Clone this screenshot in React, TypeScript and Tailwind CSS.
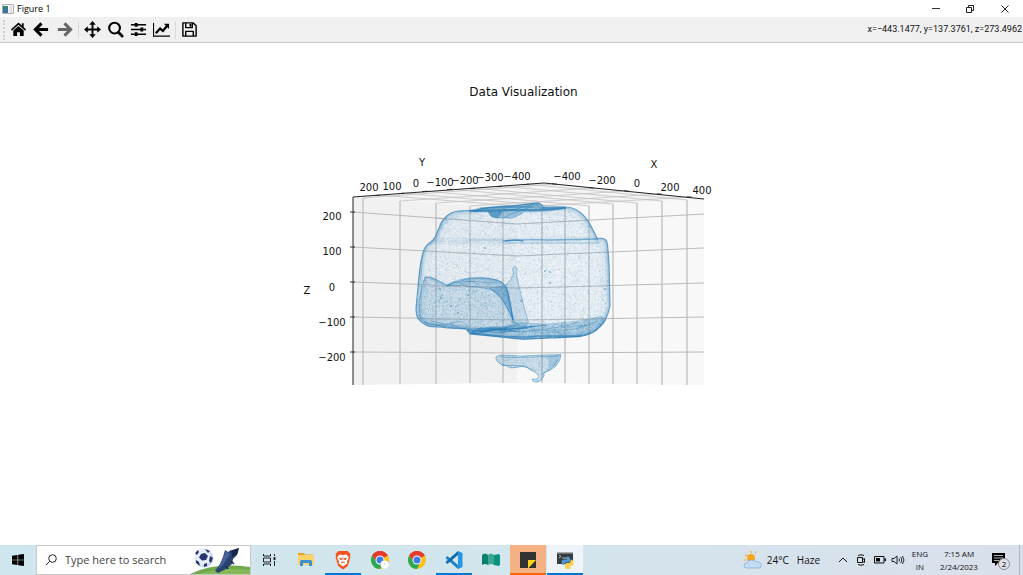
import type { ReactNode } from "react";

// Small seeded generator so the point cloud looks the same on every render
function createRandom(seed: number) {
  let s = seed;
  return () => {
    s = (s * 1664525 + 1013904223) % 4294967296;
    return s / 4294967296;
  };
}

// Scatter n one pixel dots inside a box, clipped later by the outline
function scatter(n: number, seed: number, x: number, y: number, w: number, h: number) {
  const rand = createRandom(seed);
  let d = "";
  for (let i = 0; i < n; i++) {
    d += `M${(x + rand() * w).toFixed(1)} ${(y + rand() * h).toFixed(1)}h1`;
  }
  return d;
}

const BODY =
  "M418 287C419 275 420 262 423 253C424 247 428 244 433 240C437 236 437 232 439 228C442 219 449 212 458 211L477 210C490 206 508 207 520 205L535 203Q541 202 543 207L567 207C580 208 588 219 593 230L597 238L603 238.500Q607 239 607.500 245L609 262L610 306C608 316 605 323 595 331C586 338 565 337 550 338L523 339.300L500 337L470 334L466 329L447 328C438 326 430 328 426 325C417 320 416 315 416 309Z";
const LOBE =
  "M420 318C417 306 421 288 425 277Q431 276 437 280L447 285Q453 283 460 281C469 277 484 277 493 279C505 281 508 288 509 300L514 322L520 325L500 329L467 329L446 327L427 324Z";
const FOLD =
  "M447 285Q460 278 472 278C486 278 497 279 503 283C509 290 510 302 513 320C508 311 505 299 494 291C485 286 470 288 462 285Q455 287 447 285Z";
const FOLD_EDGE = "M489 288Q499 286 505 286C509 293 510 305 513 320C508 309 504 298 489 288Z";
const SPIKE = "M506 285L511 279Q515 273 512.500 269Q514 265 517 268Q516 276 518.500 284L523 303L528.500 323L513 323Q511 301 506 285Z";
const BASE =
  "M467 330Q490 326 502 327L520 323L547 324L577 321L602 316L606 320Q600 332 580 337L550 338L523 339L500 337L470 334Z";
const CHIP =
  "M496 357Q498 355 503 355L520 356L546 355L561 354.500Q561 360 556 366Q551 370 544 373L544 376Q541 382 537 382Q532 382 532 379Q538 380 539 376Q536 372 531 370Q525 365 519 367L511 368Q506 365 502 365Q495 361 496 357Z";
const CREASE = "M470 211L479 208Q500 206 520 205L537 203L541 207L566 208L550 211L524 212Q513 220 506 218L498 218L491 216L488 212Z";

const BODY_DOTS = scatter(11000, 7, 414, 202, 198, 140);
const BODY_GLINTS = scatter(11000, 91, 414, 202, 198, 140);
const LOBE_DOTS = scatter(4000, 21, 414, 275, 118, 56);
const BASE_DOTS = scatter(3500, 33, 464, 314, 144, 27);
const CHIP_DOTS = scatter(800, 45, 494, 353, 70, 30);

// Vertical grid lines: [x, top, bottom]
const VERTICALS = [
  [363, 198, 385], [400, 201, 384], [436, 203, 384], [470, 206, 383], [503, 208, 383],
  [542, 208, 383], [565, 207, 383], [589, 206, 384], [613, 204, 384], [637, 203, 384],
  [662, 201, 385], [687, 200, 385],
];

// Height of every z line at the left wall, the corner and the right wall
const Z_LINES = [
  [212, 224, 214],
  [247, 256, 248],
  [282, 288, 283],
  [317, 320, 317],
  [352, 353, 352],
];

// Ceiling lines: [x1, y1, x2, y2]
const CEILING = [
  [378, 195, 542, 208], [402, 193, 565, 207], [425, 191, 589, 206], [450, 189, 613, 204],
  [473, 188, 637, 203], [500, 186, 662, 201], [527, 184, 687, 200],
  [555, 184, 363, 198], [592, 188, 400, 201], [627, 191, 436, 203], [660, 194, 470, 206], [690, 197, 503, 208],
];

const LABELS: [string, number, number][] = [
  ["200", 369, 191], ["100", 392, 190], ["0", 416, 187], ["−100", 440, 186],
  ["−200", 465, 184], ["−300", 490, 181], ["−400", 517, 180],
  ["−400", 567, 180], ["−200", 602, 184], ["0", 637, 187], ["200", 670, 191], ["400", 702, 194],
  ["200", 332, 220], ["100", 332, 255], ["0", 332, 291], ["−100", 332, 326], ["−200", 332, 361],
  ["Y", 422, 166], ["X", 654, 168], ["Z", 307, 294],
];

const SPECKS = [
  [440, 289], [441, 298], [451, 306], [458, 313], [468, 295], [545, 271],
  [550, 272], [550, 283], [605, 289], [521, 301], [485, 248],
];

function Plot() {
  return (
    <svg viewBox="300 141 448 250" className="mt-10 block w-[448px]" role="img" aria-label="3D point cloud">
      <defs>
        <clipPath id="body"><path d={BODY} /></clipPath>
        <clipPath id="lobe"><path d={LOBE} /></clipPath>
        <clipPath id="base"><path d={BASE} /></clipPath>
        <clipPath id="chip"><path d={CHIP} /></clipPath>
      </defs>

      {/* Panes */}
      <path d="M353 197L517 209V383L353 385Z" fill="#f1f1f1" />
      <path d="M517 209L704 199V385L517 383Z" fill="#f8f8f8" />
      <path d="M353 197L544 183L704 199L517 209Z" fill="#f4f4f4" />

      {/* Grid */}
      <g fill="none">
        {VERTICALS.map(([x, top, bottom]) => (
          <g key={x}>
            <path d={`M${x} ${top}V${bottom}`} stroke="#dadada" strokeWidth="2" />
            <path d={`M${x} ${top}V${bottom}`} stroke="#c6c6c6" strokeWidth="0.8" />
          </g>
        ))}
        {Z_LINES.map(([left, mid, right]) => (
          <path key={left} d={`M353 ${left}L517 ${mid}L704 ${right}`} stroke="#bababa" />
        ))}
        {CEILING.map(([x1, y1, x2, y2]) => (
          <path key={x1} d={`M${x1} ${y1}L${x2} ${y2}`} stroke="#c2c2c2" strokeWidth="0.8" />
        ))}
      </g>

      {/* Axis lines and ticks */}
      <g fill="none" stroke="#222">
        <path d="M353 385V197L544 183L704 199" />
        {Z_LINES.map(([left]) => (
          <path key={left} d={`M350 ${left}h5`} strokeWidth="0.9" />
        ))}
        {CEILING.map(([x, y], i) => (
          <path key={x} d={i < 7 ? `M${x - 3} ${y + 0.7}l5 -.5` : `M${x - 3} ${y - 0.3}l5 .5`} strokeWidth="0.8" />
        ))}
      </g>

      {/* Point cloud */}
      <g fill="#1f77b4" stroke="#1f77b4">
        <path d={BODY} fill="#fff" fillOpacity="0.35" stroke="none" />
        <path d={BODY} fillOpacity="0.08" strokeOpacity="0.65" strokeWidth="1.2" />
        <g clipPath="url(#body)" fill="none">
          <path d={BODY_DOTS} strokeOpacity="0.1" />
          <path d={BODY_GLINTS} stroke="#fff" strokeOpacity="0.28" />
          <path d={BODY} strokeWidth="18" strokeOpacity="0.04" />
          <path d={BODY} strokeWidth="8" strokeOpacity="0.1" />
          <path d={BODY} strokeWidth="4" strokeOpacity="0.18" />
          <path d="M430 241H500L598 240" strokeOpacity="0.07" strokeWidth="7" />
          <path d="M503 241Q530 239 550 240L598 239" strokeOpacity="0.5" strokeWidth="1.4" />
          <path d="M505 241Q515 239 523 241" strokeOpacity="0.6" strokeWidth="1.6" />
          <path d="M503 243H600M470 240H503" strokeOpacity="0.14" strokeWidth="2" />
          <path d="M422 255L421 288Q423 302 420 318M439 230Q446 220 458 216" strokeOpacity="0.2" />
        </g>
        <path d={LOBE} fillOpacity="0.11" strokeOpacity="0.45" strokeWidth="0.9" />
        <g clipPath="url(#lobe)" fill="none">
          <path d={LOBE_DOTS} strokeOpacity="0.1" />
          <path d={LOBE} strokeWidth="5" strokeOpacity="0.13" />
        </g>
        <path d={FOLD} fillOpacity="0.12" strokeOpacity="0.5" strokeWidth="0.8" />
        <path d={FOLD_EDGE} fillOpacity="0.3" strokeOpacity="0.4" strokeWidth="0.7" />
        <path d="M425 277Q433 277 447 286Q457 279 462 284Q472 278 480 286M462 281L498 283" fill="none" strokeOpacity="0.4" strokeWidth="0.8" />
        <path d={SPIKE} fillOpacity="0.16" strokeOpacity="0.45" strokeWidth="0.8" />
        <path d={BASE} fillOpacity="0.2" strokeOpacity="0.2" strokeWidth="0.8" />
        <path d={BASE_DOTS} clipPath="url(#base)" strokeOpacity="0.14" />
        <g fill="none">
          <path d="M470 332Q490 328 510 329L547 325M468 330L500 333L535 326M474 334L500 329L520 332M480 331L528 328" strokeOpacity="0.6" />
          <path d="M470 333L500 336Q522 338 540 336L581 336" strokeWidth="1.5" strokeOpacity="0.55" />
          <path d="M530 330Q560 329 577 322M540 333Q575 332 598 321M560 328L590 325M500 332L560 330" strokeOpacity="0.3" />
          <path d="M424 322Q440 328 452 323T470 329M430 321Q446 324 458 326" strokeOpacity="0.4" />
          <path d="M472 332Q489 328 506 330" strokeWidth="4" strokeOpacity="0.45" />
          <path d="M500 330L527 326" strokeWidth="2.500" strokeOpacity="0.35" />
        </g>
        <path d={CREASE} fillOpacity="0.35" strokeOpacity="0.4" strokeWidth="0.7" />
        <path d="M470 211L505 210Q530 211 566 208" fill="none" strokeWidth="2" strokeOpacity="0.7" />
        <path d="M488 211L492 217L498 218L502 212Z" fillOpacity="0.5" strokeOpacity="0.35" />
        <path d="M504 218Q514 212 534 206M480 208L535 207M498 212Q517 210 534 204M535 204Q538 208 546 210" fill="none" strokeOpacity="0.5" strokeWidth="0.8" />
        <path d={CHIP} fillOpacity="0.2" strokeOpacity="0.5" strokeWidth="0.9" />
        <path d="M546 357L560 355Q559 362 554 366L546 370Q552 363 546 357Z" fillOpacity="0.2" stroke="none" />
        <path d={CHIP_DOTS} clipPath="url(#chip)" strokeOpacity="0.12" />
        <path d="M500 357Q520 358 534 357L559 356M543 373Q554 369 558 359M502 365L524 366L533 370" fill="none" strokeOpacity="0.5" strokeWidth="0.8" />
        {SPECKS.map(([x, y]) => (
          <circle key={`${x}-${y}`} cx={x} cy={y} r="0.7" stroke="none" />
        ))}
      </g>

      {/* Grid seen through the cloud */}
      <g fill="none" stroke="#8a9aa5" strokeOpacity="0.4">
        <path d="M436 234V327M470 211V334M503 208V337M542 208V338M565 208V337M589 222V334M436 218L517 224L590 220M424 251L517 256L608 252M418 286L517 288L609 286M417 319L517 320L606 319" />
      </g>

      <g fill="#111" textAnchor="middle" className="font-['DejaVu_Sans',sans-serif] text-[10px]">
        {LABELS.map(([text, x, y]) => (
          <text key={`${x}-${y}`} x={x} y={y}>{text}</text>
        ))}
      </g>
    </svg>
  );
}

function Tool({ label, children }: { label: string; children: ReactNode }) {
  return (
    <button type="button" aria-label={label} className="flex h-6 w-[23px] items-center justify-center">
      <svg viewBox="0 0 18 18" className="size-[17px]" fill="#000">{children}</svg>
    </button>
  );
}

function Toolbar() {
  return (
    <div className="flex h-[26px] items-center border-b border-[#c9c9c9] bg-[#f0f0f0] pr-px">
      <div className="ml-[3px] mr-[2px] h-5 border-l-2 border-dotted border-[#cfcfcf]" />
      <Tool label="Home">
        <path d="M9 1.500L1 9l1 1.200L9 4l7 6.200L17 9l-2.500-2.400V2.500h-2v2.200z" />
        <path d="M3.500 10L9 5.200l5.500 4.800v6h-4v-4h-3v4h-4z" />
      </Tool>
      <Tool label="Back">
        <path d="M9 2.500L2.500 9L9 15.500M3 9h13" fill="none" stroke="#000" strokeWidth="3.200" />
      </Tool>
      <Tool label="Forward">
        <path d="M9 2.500L15.500 9L9 15.500M15 9H2" fill="none" stroke="#666" strokeWidth="3.200" />
      </Tool>
      <div className="mx-[2px] h-[18px] w-px bg-[#d9d9d9]" />
      <Tool label="Pan">
        <path d="M9 0l3.500 4H10v4h4V5.500L18 9l-4 3.500V10h-4v4h2.500L9 18l-3.500-4H8v-4H4v2.500L0 9l4-3.500V8h4V4H5.500z" />
      </Tool>
      <Tool label="Zoom">
        <circle cx="8" cy="7.500" r="5.700" fill="none" stroke="#000" strokeWidth="2.200" />
        <path d="M12 12L16 16" stroke="#000" strokeWidth="3" strokeLinecap="round" />
      </Tool>
      <Tool label="Configure subplots">
        <path d="M1 4h16M1 9h16M1 14h16" stroke="#000" strokeWidth="1.500" />
        <path d="M5 2h3v4H5zM11 7h3v4h-3zM5 12h3v4H5z" />
      </Tool>
      <Tool label="Edit axes">
        <path d="M.500 2v14H18" fill="none" stroke="#000" strokeWidth="1.300" />
        <path d="M3 13l4.500-5 3 2.500L15 5" fill="none" stroke="#000" strokeWidth="2.400" />
        <path d="M11.500 3H17v5.500z" />
      </Tool>
      <div className="mx-[2px] h-[18px] w-px bg-[#d9d9d9]" />
      <Tool label="Save">
        <path d="M2 2h11l3 3v11H2zM5 2v5h7V2M5 16v-5h8v5" fill="none" stroke="#000" strokeWidth="1.500" strokeLinejoin="round" />
        <path d="M9 3h2v3H9z" />
      </Tool>
      <span className="ml-auto font-[Roboto,sans-serif] text-[9px] text-[#111]">x=−443.1477, y=137.3761, z=273.4962</span>
    </div>
  );
}

function TitleBar() {
  return (
    <header className="flex h-[17px] items-center">
      <svg viewBox="0 0 12 10" className="ml-[2px] h-[10px] w-3">
        <path d="M.5.500h11v9H.5z" fill="#f4f4f4" stroke="#b0b0b0" />
        <path d="M1 2h5v7H1z" fill="#2f8577" />
        <path d="M1 5h5v4H1z" fill="#3e75a8" />
        <path d="M8 2h2v7H8z" fill="#ddd" />
      </svg>
      <h1 className="ml-[3px] text-[9px] text-black">Figure 1</h1>
      <div className="ml-auto flex h-full">
        <button type="button" aria-label="Minimize" className="flex w-[34px] items-center justify-center">
          <svg viewBox="0 0 10 10" className="size-[10px]"><path d="M1 4.500h8" stroke="#333" /></svg>
        </button>
        <button type="button" aria-label="Restore" className="flex w-[34px] items-center justify-center">
          <svg viewBox="0 0 10 10" className="size-[10px]" fill="none" stroke="#222">
            <path d="M1.500 3.500h5v5h-5zM3.500 3V1.500h5v5H7" />
          </svg>
        </button>
        <button type="button" aria-label="Close" className="flex w-9 items-center justify-center">
          <svg viewBox="0 0 10 10" className="size-[10px]"><path d="M1.500 1.500l7 7m0-7l-7 7" stroke="#222" /></svg>
        </button>
      </div>
    </header>
  );
}

function Chrome() {
  return (
    <>
      <circle cx="10" cy="10" r="9" fill="#fbc116" />
      <path d="M10 10L2.200 5.500A9 9 0 0 1 17.800 5.500z" fill="#e33b2e" />
      <path d="M10 6h7.900A9 9 0 0 0 2.200 5.500L6.500 12z" fill="#e33b2e" />
      <path d="M2.200 5.500A9 9 0 0 0 10 19l3.500-7L10 14Q7.500 14 6.500 12z" fill="#2da94f" />
      <circle cx="10" cy="10" r="4.500" fill="#fff" />
      <circle cx="10" cy="10" r="3.500" fill="#3b7ded" />
    </>
  );
}

interface TaskProps {
  label: string;
  className?: string;
  children: ReactNode;
}

function Task({ label, className = "border-transparent", children }: TaskProps) {
  return (
    <button type="button" aria-label={label} className="flex h-full w-[37px] pr-px">
      <span className={`flex h-full w-full items-center justify-center border-b-2 ${className}`}>
        <svg viewBox="0 0 20 20" className="mt-[2px] size-5">{children}</svg>
      </span>
    </button>
  );
}

function SearchArt() {
  return (
    <svg viewBox="0 0 60 28" className="h-7 w-[60px] shrink-0">
      <path d="M0 28Q25 16 60 21V28z" fill="#6fa84a" />
      <path d="M8 28Q35 20 60 24V28z" fill="#83b957" />
      <circle cx="14" cy="12" r="9.500" fill="#c9d8f4" />
      <circle cx="13" cy="11" r="8" fill="#e6edfb" />
      <path d="M11 8l4-1 3 3-2 4-4 .5-3-3zM5 7l3-3 1 2-2 3zM15 3l5 2-2 2zM20 10l3 2-2 5-2-2zM6 14l3 2 1 4-4-3zM14 18l3-1v3l-3 1z" fill="#28356f" />
      <path d="M35 4l3 2 3-2 2 2 5-3-1 6-4 4-1 5-6 5-8 4-3-2 5-7 3-7z" fill="#2c4272" />
      <path d="M36 5l4 3-4 6-4 6-4 3 4-8z" fill="#46669b" />
      <path d="M42 5l6-2-1 4-4 3zM36 20l2 3M41 15l3 3" fill="#18264d" stroke="#18264d" strokeWidth="1.500" />
    </svg>
  );
}

function Taskbar() {
  return (
    <footer className="flex h-[30px] items-stretch bg-linear-to-r from-[#cfe6ee] via-[#d3e5ed] to-[#d9e0ec] text-[#111]">
      <button type="button" aria-label="Start" className="flex w-9 items-center justify-center">
        <svg viewBox="0 0 12 12" className="size-3">
          <path d="M0 1.700l5.500-.8v4.800H0zM6.200.800L12 0v5.700H6.200zM0 6.300h5.500v4.800L0 10.300zM6.200 6.300H12V12l-5.800-.8z" />
        </svg>
      </button>
      <label className="flex w-[215px] items-center overflow-hidden border border-[#c8c8c8] bg-white">
        <svg viewBox="0 0 12 12" className="ml-2 mr-2 size-3 shrink-0" fill="none" stroke="#222">
          <circle cx="7.500" cy="4.500" r="3.800" />
          <path d="M4.700 7.300L.8 11.200" />
        </svg>
        <input type="text" aria-label="Search" placeholder="Type here to search" className="w-0 grow bg-transparent text-[11px] outline-none placeholder:text-[#444]" />
        <SearchArt />
      </label>
      <Task label="Task view">
        <path d="M4.500 4v2h7V4M4.500 16v-2h7v2M4.500 8h7v4h-7zM15.500 4v2M15.500 11v5" fill="none" stroke="#222" />
        <path d="M14.500 7h2v3h-2z" fill="#222" />
      </Task>
      <Task label="File Explorer">
        <path d="M2 3h6l1 1.500h8V8H2z" fill="#e5a521" />
        <path d="M2 5h16v10H2z" fill="#fbd36b" />
        <path d="M4 16v-4.500Q4 10 5.500 10h9Q16 10 16 11.500V16h-3v-3H7v3z" fill="#3d91d0" />
      </Task>
      <Task label="Brave" className="border-[#0078d7]">
        <path d="M5.500 1h9L17.500 4l-.5 2 .3 1.500-2.500 8.500L10 19.500l-4.800-3.500L2.700 7.500 3 6l-.5-2z" fill="#f4511e" />
        <path d="M6.500 4.500l3.500.5 3.500-.5 2.500 3-2 4 .3 2L10 16.500l-4.300-3 .3-2-2-4z" fill="#fff" />
        <path d="M6.500 8l2.500.5-1 1.500zM13.500 8l-2.500.5 1 1.500zM10 6.500v4M8 13l2-1 2 1" fill="#f4511e" stroke="#f4511e" strokeWidth=".7" />
      </Task>
      <Task label="Chrome profile">
        <Chrome />
        <circle cx="14.500" cy="14.500" r="4" fill="#fff" />
        <circle cx="14.500" cy="14" r="1" fill="#ddd" />
      </Task>
      <Task label="Chrome"><Chrome /></Task>
      <Task label="Visual Studio Code" className="border-[#0078d7]">
        <path d="M14 1l4.500 2v14L14 19z" fill="#2496e2" />
        <path d="M3.300 6L14 15v4L1.500 8z" fill="#1b82cc" />
        <path d="M3.300 14L14 5V1L1.500 12z" fill="#126bb0" />
      </Task>
      <Task label="Manual">
        <path d="M1 5q3-3 6 0v10q-3-2-6 0z" fill="#0a7f6e" />
        <path d="M7 5q3-3 6 0v10q-3-2-6 0z" fill="#35aa91" />
        <path d="M13 5l5-1 1 2v8l-1 2-5-1z" fill="#08917c" />
      </Task>
      <Task label="Sticky Notes" className="border-[#f7630c] bg-[#f4b183]">
        <path d="M2 2h16v16H2z" fill="#333" />
        <path d="M10 10h8l-7.500 8H10z" fill="#ffd51c" />
      </Task>
      <Task label="Python" className="border-[#0078d7] bg-[#edf3f9]">
        <path d="M2 2h16v12H2z" fill="#343a3d" />
        <path d="M2 2h16v1.500H2z" fill="#aaa" />
        <path d="M4 5l2 1.500L4 8M7 8h3" fill="none" stroke="#eee" strokeWidth=".7" />
        <path d="M11 7q3-1.500 4 1v3q0 1.500-2 1.500h-2Q9 13 9 15H8q-2-1-1.500-4Q7 9.500 9 9.500h3V9h-2V8z" fill="#4d94cf" />
        <path d="M15.500 9.500Q18.500 9.500 18.500 13T16 16h-2v1h2q0 2-3 2t-3-2v-2q0-2 2-2h2q1.500 0 1.500-2z" fill="#fdce48" />
      </Task>

      <div className="ml-auto flex items-center">
        <button type="button" className="flex h-full items-center text-[10px]">
          <svg viewBox="0 0 20 18" className="mr-1 h-[18px] w-5">
            <circle cx="8" cy="7" r="4" fill="#f8a51b" />
            <path d="M8 0v2M2 4l2 1M12 2l1-1.500M1 9h2" stroke="#f8a51b" strokeWidth="1.200" />
            <path d="M3.500 17Q1 17 1 14.500T4 12Q5 9 8.500 9T13 11Q17 10 18.500 14 18.500 17 16 17z" fill="#c2dcf4" stroke="#7da8d7" strokeWidth=".7" />
          </svg>
          24°C
          <span className="ml-2">Haze</span>
        </button>
        <button type="button" aria-label="Show hidden icons" className="ml-[18px]">
          <svg viewBox="0 0 10 10" className="size-[10px]"><path d="M1 7l4-4 4 4" fill="none" stroke="#111" /></svg>
        </button>
        <svg viewBox="0 0 10 12" className="ml-2 h-3 w-[10px]" fill="none" stroke="#111">
          <path d="M1.500 3.500h5v5h-5zM6.500 5.500l2-1v4l-2-1M2 1.500Q5 0 8 1.500M2 10.500Q5 12 8 10.500" />
        </svg>
        <svg viewBox="0 0 12 8" className="ml-2 h-2 w-3">
          <path d="M.5.500h9.500v6.500H.5z" fill="none" stroke="#111" />
          <path d="M2 2h4v3.500H2zM10.500 2.500H12v2.500h-1.500z" />
        </svg>
        <svg viewBox="0 0 14 12" className="ml-[5px] h-3 w-[14px]" fill="none" stroke="#111" strokeWidth=".9">
          <path d="M1 4.500h2L6 2v8L3 7.500H1zM8 4.500q1 1.500 0 3M9.800 3q2 3 0 6M11.500 2q3 4 0 8" />
        </svg>
        <button type="button" className="ml-1 w-[22px] text-center text-[8px] leading-[13px]">ENG<br />IN</button>
        <button type="button" className="ml-1 w-12 text-center text-[8px] leading-[13px]">7:15 AM<br />2/24/2023</button>
        <button type="button" aria-label="Notifications" className="flex h-full w-9 items-center justify-center">
          <svg viewBox="0 0 20 20" className="size-5">
            <path d="M1 3h13v10H7l-3 3v-3H1z" />
            <path d="M3 5.500h9M3 8h9M3 10.500h5" stroke="#d9e0ec" strokeWidth=".8" />
            <circle cx="13" cy="14" r="5.500" fill="#dfe2e8" stroke="#8b8e94" />
            <text x="13" y="17" textAnchor="middle" fontSize="8">2</text>
          </svg>
        </button>
        <div className="h-full w-1 border-l border-[#aeb7c2]" />
      </div>
    </footer>
  );
}

export default function App() {
  return (
    <div className="flex min-h-screen flex-col bg-white font-['Open_Sans','Noto_Sans',sans-serif]">
      <TitleBar />
      <Toolbar />
      <main className="flex grow flex-col items-center pl-6 pt-10">
        <h2 className="font-['DejaVu_Sans',sans-serif] text-[12px] leading-[18px] text-[#111]">Data Visualization</h2>
        <Plot />
      </main>
      <Taskbar />
    </div>
  );
}
